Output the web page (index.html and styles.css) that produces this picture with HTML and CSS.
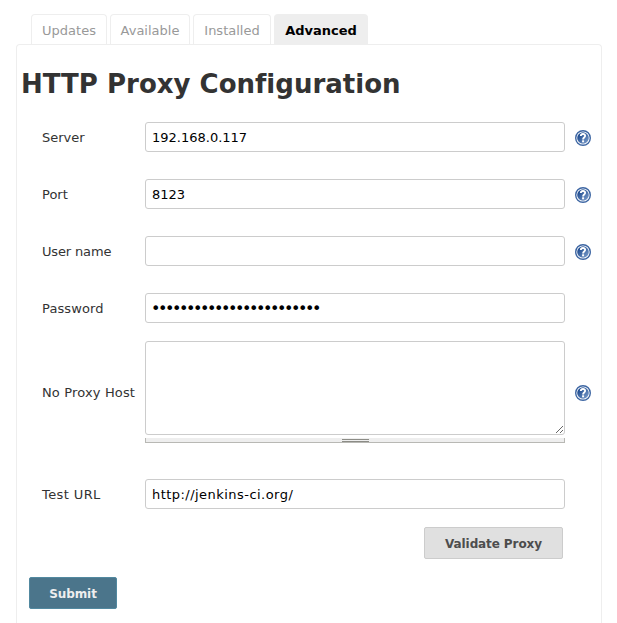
FILE: index.html
```html
<!DOCTYPE html>
<html lang="en"><head><meta charset="utf-8"><title>HTTP Proxy Configuration</title><link rel="stylesheet" href="styles.css"></head>
<body>
<svg class="defs" width="0" height="0"><defs>
<linearGradient id="blue" x1="0" y1="0" x2="1" y2="1"><stop offset="0.2" stop-color="#204d91"/><stop offset="1" stop-color="#83a3cf"/></linearGradient>
<symbol id="help" viewBox="0 0 16 16"><circle cx="8" cy="8" r="7.3" fill="#fff" stroke="#3d66a3" stroke-width="1.4"/><circle cx="8" cy="8" r="5.8" fill="url(#blue)"/><path d="M5.8 6C5.9 3.3 10.3 3.4 10.1 6C10 7.5 8.1 7.6 8.1 9.4" fill="none" stroke="#fff" stroke-width="1.9"/><rect x="7.1" y="10.3" width="2" height="2" fill="#fff"/></symbol>
</defs></svg>
<nav class="tabs"><a class="tab updates">Updates</a><a class="tab available">Available</a><a class="tab installed">Installed</a><a class="tab active">Advanced</a></nav>
<main class="panel">
<h1>HTTP Proxy Configuration</h1>
<form>
<div class="row"><label>Server</label><input type="text" value="192.168.0.117"><svg class="help"><use href="#help"/></svg></div>
<div class="row"><label>Port</label><input type="text" value="8123"><svg class="help"><use href="#help"/></svg></div>
<div class="row user"><label>User name</label><input type="text"><svg class="help"><use href="#help"/></svg></div>
<div class="row password"><label>Password</label><div class="input dots">••••••••••••••••••••••••</div></div>
<div class="row host"><label>No Proxy Host</label><div class="area"><textarea></textarea><div class="handle"><i></i></div></div><svg class="help"><use href="#help"/></svg></div>
<div class="row test"><label>Test URL</label><input type="text" value="http://jenkins-ci.org/"></div>
<button type="button" class="validate">Validate Proxy</button>
<button type="button" class="submit">Submit</button>
</form>
</main>
</body></html>
```
FILE: styles.css
```css
*{box-sizing:border-box}
body{margin:0;height:623px;background:#fff;font:13px "DejaVu Sans",Verdana,sans-serif;color:#333}
.defs{position:absolute}
.tabs{display:flex;gap:3px;padding:14px 0 0 31px;height:44px}
.tab{height:30px;border:1px solid #eee;border-bottom:0;border-radius:4px 4px 0 0;color:#999;text-align:center;line-height:32px}
.updates{width:76px}.available{width:80px}.installed{width:78px}
.tab.active{width:94px;background:#eee;color:#000;font-weight:bold}
.panel{margin-left:16px;width:586px;height:579px;border:1px solid #eee;border-bottom:0;border-radius:4px 4px 0 0;padding:23px 4px 0}
h1{margin:0 0 22px;font-size:26px;line-height:32px;height:32px;white-space:nowrap;letter-spacing:.01px}
.row{display:grid;grid-template-columns:103px 420px 26px;height:30px;margin:0 0 27px 21px;align-items:center}
label{white-space:nowrap}
input,.input,textarea{width:420px;height:30px;border:1px solid #ccc;border-radius:3px;padding:0 6px;background:#fff;color:#000;font:inherit;outline:0}
.help{width:16px;height:16px;margin-left:10px;margin-top:2px}
.user label{letter-spacing:-.15px}
.row.password{margin-bottom:18px}
.password label{letter-spacing:.12px}
.dots{padding-left:5px;font-size:16px;line-height:29px;letter-spacing:-2.44px}
.row.host{height:102px;margin-bottom:36px}
.host label{letter-spacing:.15px}
.area{height:102px}
textarea{display:block;height:94px;resize:vertical}
.handle{height:5px;margin-top:3px;border:1px solid #b8b8b4;border-top:0;background:#eee;overflow:hidden}
.handle i{display:block;width:27px;height:3px;margin:1px auto 0;border:1px solid #8c8c86;border-width:1px 0}
.row.test{margin-bottom:18px}
.test label{letter-spacing:.4px}
.test input{letter-spacing:.46px}
button{display:block;height:32px;padding:2px 0 0;border-radius:2px;font:bold 12px "DejaVu Sans",Verdana,sans-serif;letter-spacing:-.1px}
.validate{width:139px;margin-left:403px;border:1px solid #ccc;background:#e0e0e0;color:#4d4d4d}
.submit{width:88px;margin:18px 0 0 8px;border:1px solid #5289a0;background:#4b758b;color:#eee}
```
